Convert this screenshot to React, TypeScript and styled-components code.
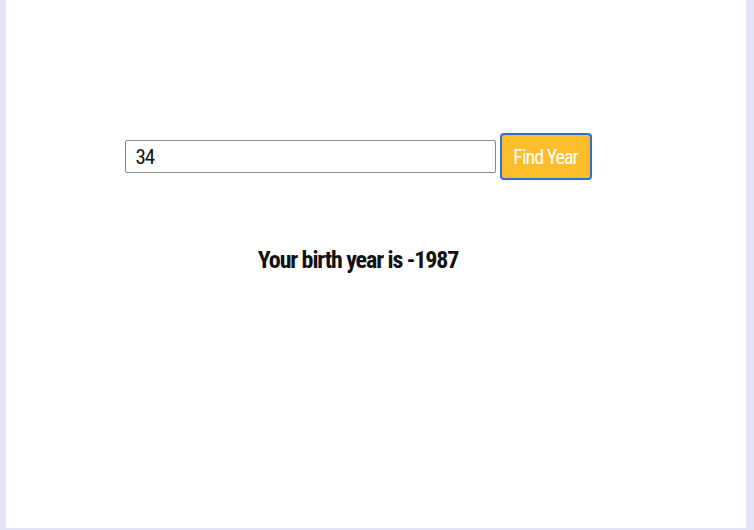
import styled, { createGlobalStyle } from 'styled-components';

const GlobalStyle = createGlobalStyle`
  body {
    margin: 0;
    background: #e4e6f7;
    font-family: "Roboto Condensed", Roboto, "Liberation Sans", sans-serif;
  }
`;

export default function App() {
  return (
    <>
      <GlobalStyle />
      <Panel>
        <Form onSubmit={(e) => e.preventDefault()}>
          <AgeInput type="text" defaultValue="34" />
          <FindButton type="submit">Find Year</FindButton>
        </Form>
        <Result>Your birth year is -1987</Result>
      </Panel>
    </>
  );
}

const Panel = styled.div`
  display: flex;
  flex-direction: column;
  align-items: center;
  box-sizing: border-box;
  height: 528px;
  margin: 0 8px 2px 6px;
  padding: 133px 36px 0 0;
  background: #ffffff;
`;

const Form = styled.form`
  display: flex;
  align-items: center;
  gap: 4px;
`;

const AgeInput = styled.input`
  box-sizing: border-box;
  width: 371px;
  height: 33px;
  padding: 0 10px;
  border: 1px solid #8a8a8a;
  border-radius: 2px;
  font-family: "Roboto Condensed", Roboto, sans-serif;
  font-size: 21px;
  letter-spacing: -1.2px;
  color: #111;
  outline: none;
`;

const FindButton = styled.button`
  box-sizing: border-box;
  width: 92px;
  height: 47px;
  padding: 0;
  border: 2px solid #2f6fd6;
  border-radius: 4px;
  background: #fbbd2c;
  color: #ffffff;
  font-family: "Roboto Condensed", Roboto, sans-serif;
  font-size: 20px;
  letter-spacing: -1px;
  cursor: pointer;
`;

const Result = styled.h2`
  margin: 66px 0 0;
  font-size: 24px;
  font-weight: 700;
  letter-spacing: -1.1px;
  color: #111;
`;
